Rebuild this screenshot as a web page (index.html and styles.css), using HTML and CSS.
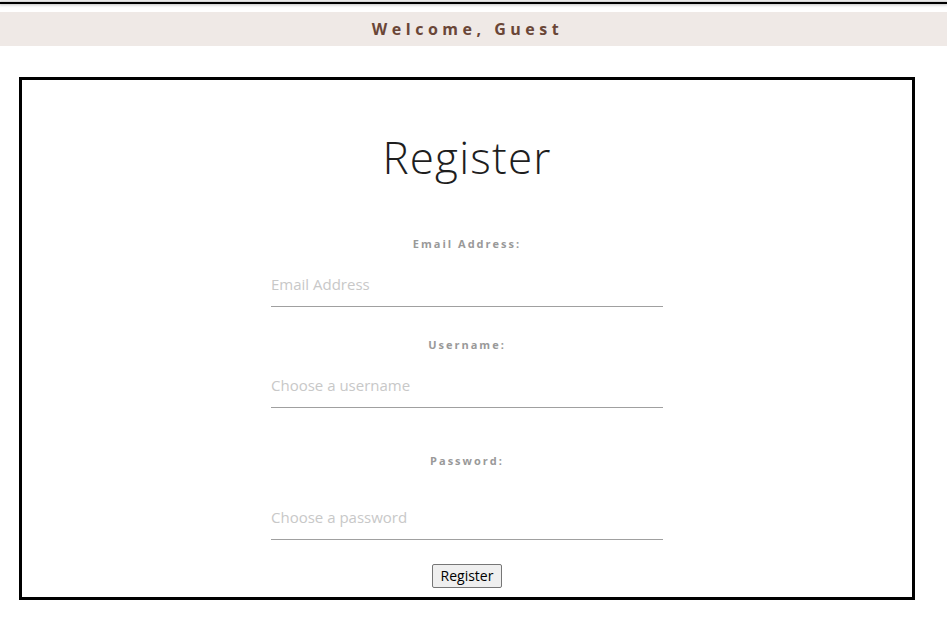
FILE: index.html
```html
<!DOCTYPE html>
<html lang="en">
<head>
<meta charset="utf-8">
<title>Register</title>
<link rel="stylesheet" href="styles.css">
</head>
<body>
<div class="topline"></div>
<header class="welcome">Welcome, Guest</header>
<main class="card">
  <h1 class="title">Register</h1>
  <form class="form">
    <label class="label label-email" for="email">Email Address:</label>
    <input class="field field-email" id="email" type="email" placeholder="Email Address">
    <label class="label label-user" for="user">Username:</label>
    <input class="field field-user" id="user" type="text" placeholder="Choose a username">
    <label class="label label-pass" for="pass">Password:</label>
    <input class="field field-pass" id="pass" type="password" placeholder="Choose a password">
    <div class="actions"><button class="btn" type="button">Register</button></div>
  </form>
</main>
</body>
</html>
```
FILE: styles.css
```css
html, body {
  margin: 0;
  padding: 0;
  background: #fff;
}
body {
  font-family: "Open Sans", "Noto Sans", sans-serif;
}
.topline {
  height: 2px;
  margin-top: 2px;
  background: #000;
  box-shadow: 0 0 3px 1px rgba(0,0,0,0.25);
}
.welcome {
  margin-top: 8px;
  height: 34px;
  line-height: 34px;
  padding-right: 12px;
  background: #efe9e6;
  color: #6a4637;
  font-weight: 700;
  font-size: 16px;
  letter-spacing: 4.5px;
  text-align: center;
}
.card {
  margin: 31px 32px 0 19px;
  border: 3px solid #000;
  padding: 0 0 9px;
  display: flex;
  flex-direction: column;
  align-items: center;
}
.title {
  margin: 51px 0 0;
  font-size: 44px;
  line-height: 52px;
  font-weight: 300;
  letter-spacing: 1.2px;
  color: #1e1e1e;
}
.form {
  width: 392px;
  display: flex;
  flex-direction: column;
}
.label {
  display: block;
  text-align: center;
  font-size: 11px;
  line-height: 14px;
  font-weight: 700;
  letter-spacing: 2px;
  color: #999;
}
.label-email { margin-top: 54px; }
.label-user { margin-top: 31px; }
.label-pass { margin-top: 46px; }
.field {
  box-sizing: border-box;
  width: 100%;
  height: 46px;
  margin-top: 10px;
  padding: 0;
  border: 0;
  border-bottom: 1px solid #a0a0a0;
  outline: none;
  font-family: "Open Sans", "Noto Sans", sans-serif;
  font-size: 15px;
  color: #333;
  background: transparent;
}
.field-pass { margin-top: 26px; }
.field::placeholder {
  color: #c8c8c8;
}
.actions {
  margin-top: 24px;
  text-align: center;
}
.btn {
  font-family: "Open Sans", "Noto Sans", sans-serif;
  font-size: 14px;
  line-height: 20px;
  padding: 1px 8px;
  border: 1px solid #767676;
  border-radius: 2px;
  background: #efefef;
  color: #000;
}
```
